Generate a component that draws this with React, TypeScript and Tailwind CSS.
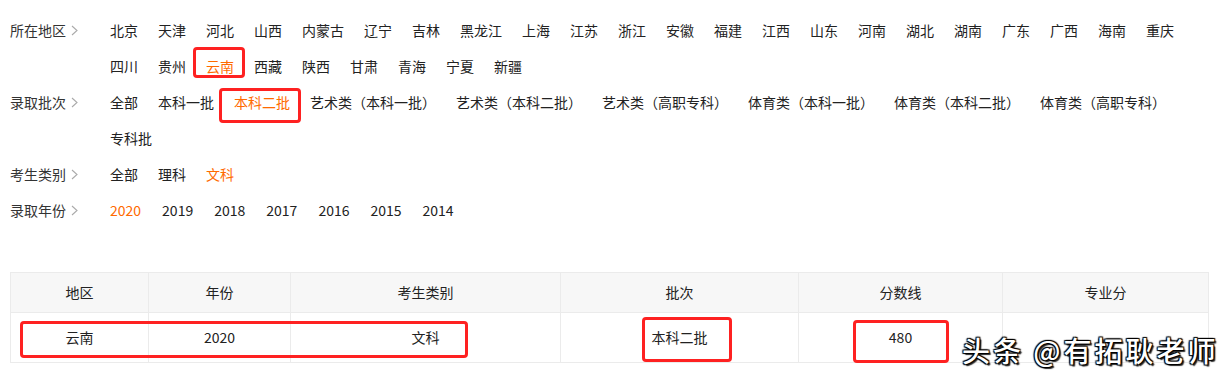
import React from 'react'

const provinces = [
  '北京', '天津', '河北', '山西', '内蒙古', '辽宁', '吉林', '黑龙江', '上海', '江苏', '浙江',
  '安徽', '福建', '江西', '山东', '河南', '湖北', '湖南', '广东', '广西', '海南', '重庆',
  '四川', '贵州', '云南', '西藏', '陕西', '甘肃', '青海', '宁夏', '新疆',
]

const batches = [
  '全部', '本科一批', '本科二批', '艺术类（本科一批）', '艺术类（本科二批）', '艺术类（高职专科）',
  '体育类（本科一批）', '体育类（本科二批）', '体育类（高职专科）', '专科批',
]

const kinds = ['全部', '理科', '文科']
const years = ['2020', '2019', '2018', '2017', '2016', '2015', '2014']

type Mark = 'province' | 'batch'

function Chevron() {
  return (
    <svg width="7" height="11" viewBox="0 0 7 11" className="ml-[5px]">
      <polyline points="1,1 6,5.5 1,10" fill="none" stroke="#aaa" strokeWidth="1.1" />
    </svg>
  )
}

function FilterRow({
  label,
  items,
  active,
  mark,
  gap = 'gap-x-5',
}: {
  label: string
  items: string[]
  active: string
  mark?: Mark
  gap?: string
}) {
  return (
    <div className="flex">
      <div className="flex h-9 w-[110px] shrink-0 items-center pl-[10px] text-[#333]">
        {label}
        <Chevron />
      </div>
      <div className={`flex w-[1100px] flex-wrap ${gap}`}>
        {items.map(item => {
          const on = item === active
          return (
            <span
              key={item}
              className={`relative leading-9 ${on ? 'text-[#ff6a00]' : 'text-[#222]'}`}
            >
              {item}
              {on && mark === 'province' && (
                <span className="absolute -left-[13px] -right-[11px] -top-px bottom-[6px] rounded-[4px] border-[3px] border-[#fe2121]" />
              )}
              {on && mark === 'batch' && (
                <span className="absolute -left-[15px] -right-[11px] top-1 -bottom-[3px] rounded-[4px] border-[3px] border-[#fe2121]" />
              )}
            </span>
          )
        })}
      </div>
    </div>
  )
}

const cols = [
  { head: '地区', value: '云南', w: 'w-[138px]' },
  { head: '年份', value: '2020', w: 'w-[142px]' },
  { head: '考生类别', value: '文科', w: 'w-[270px]' },
  { head: '批次', value: '本科二批', w: 'w-[238px]' },
  { head: '分数线', value: '480', w: 'w-[204px]' },
  { head: '专业分', value: '', w: 'flex-1' },
]

export default function App() {
  return (
    <div
      className="relative h-[380px] w-[1228px] overflow-hidden bg-white text-[14px]"
      style={{ fontFamily: '"Noto Sans CJK SC", "Noto Sans", sans-serif' }}
    >
      {/* Filters */}
      <div className="pt-3">
        <FilterRow label="所在地区" items={provinces} active="云南" mark="province" />
        <FilterRow label="录取批次" items={batches} active="本科二批" mark="batch" />
        <FilterRow label="考生类别" items={kinds} active="文科" />
        <FilterRow label="录取年份" items={years} active="2020" gap="gap-x-[21px]" />
      </div>

      {/* Result table */}
      <div className="relative ml-[10px] mt-[44px] w-[1199px] border border-[#ebebeb] text-[#222]">
        <div className="flex h-10 border-b border-[#ebebeb] bg-[#f7f7f7]">
          {cols.map((c, i) => (
            <div
              key={c.head}
              className={`${c.w} flex items-center justify-center ${i < cols.length - 1 ? 'border-r border-[#ebebeb]' : ''}`}
            >
              {c.head}
            </div>
          ))}
        </div>
        <div className="flex h-[49px]">
          {cols.map((c, i) => (
            <div
              key={c.head}
              className={`${c.w} flex items-center justify-center ${i < cols.length - 1 ? 'border-r border-[#ebebeb]' : ''}`}
            >
              {c.value}
            </div>
          ))}
        </div>

        {/* Annotation boxes */}
        <div className="absolute left-[9px] top-[48px] h-[37px] w-[448px] rounded-[4px] border-[3px] border-[#fe2121]" />
        <div className="absolute left-[631px] top-[44px] h-[45px] w-[90px] rounded-[4px] border-[3px] border-[#fe2121]" />
        <div className="absolute left-[842px] top-[47px] h-[43px] w-[96px] rounded-[4px] border-[3px] border-[#fe2121]" />
      </div>

      {/* Watermark */}
      <div className="absolute left-[962px] top-[336px] whitespace-nowrap text-[28px] font-medium leading-none tracking-[3px] text-white [text-shadow:0_0_1px_#000,1px_1px_1px_#000,-1px_-1px_1px_#000,1px_-1px_1px_#000,-1px_1px_1px_#000,2px_2px_1px_#333]">
        头条 @有拓耿老师
      </div>
    </div>
  )
}
